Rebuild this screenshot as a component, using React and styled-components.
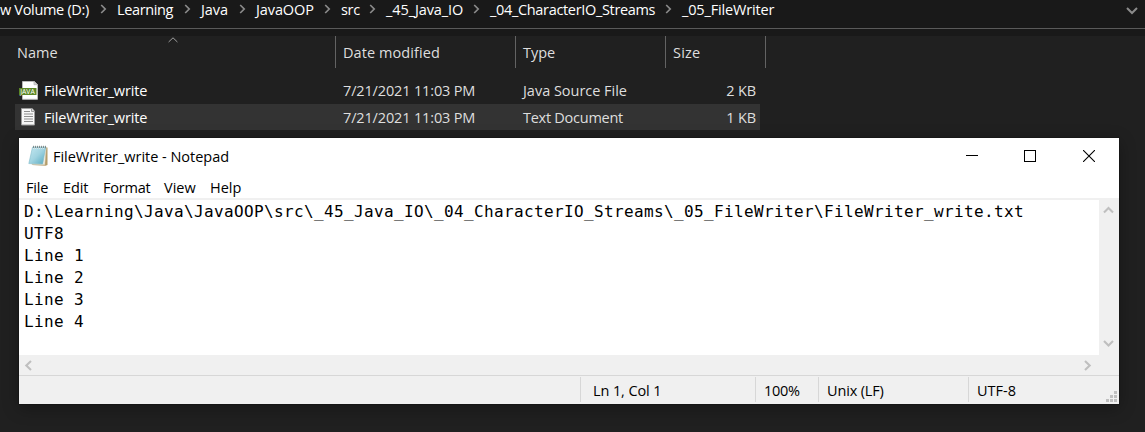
import React from 'react';
import styled, { createGlobalStyle } from 'styled-components';

const Global = createGlobalStyle`
  * { box-sizing: border-box; }
  html, body { margin: 0; background: #202020; overflow: hidden; }
  body { font: 14.5px/20px "Open Sans", "Noto Sans", sans-serif; }
`;

const Desktop = styled.main`
  width: 1145px;
  height: 432px;
  background: #202020;
  overflow: hidden;
`;

const Text = styled.span`
  white-space: pre;
  letter-spacing: ${(p) => p.$ls ?? -0.15}px;
`;

const AddressBar = styled.nav`
  display: flex;
  align-items: flex-start;
  height: 29px;
  background: #191919;
  border-bottom: 1px solid #5a5a5a;
  color: #fff;
`;

const Crumb = styled.div`
  flex: none;
  display: flex;
  width: ${(p) => p.$w}px;
  height: 20px;
`;

const CrumbChevron = styled.svg`
  flex: none;
  margin: 4px 10px 0 auto;
`;

const AddressDropdown = styled.svg`
  margin: 7px 7px 0 auto;
`;

const BarGap = styled.div`
  height: 7px;
  background: #191919;
`;

const Columns = styled.div`
  display: flex;
  height: 32px;
  padding-left: 15px;
  color: #dedede;
`;

const Column = styled.div`
  position: relative;
  width: ${(p) => p.$w}px;
  padding: ${(p) => (p.$first ? '7px 0 0 2px' : '7px 0 0 7px')};
  border-right: 1px solid #636363;
`;

const SortMark = styled.svg`
  position: absolute;
  left: 152.5px;
  top: 1px;
`;

const FileList = styled.div`
  padding: 9px 0 0 15px;
`;

const FileRow = styled.div`
  display: flex;
  align-items: center;
  width: 745px;
  height: 26px;
  margin-bottom: 1px;
  padding-top: 1px;
  background: ${(p) => (p.$selected ? '#333333' : 'transparent')};
  color: #dedede;
`;

const FileName = styled.div`
  display: flex;
  align-items: center;
  width: 328px;
  gap: 5px;
  padding-left: 4px;
  color: #fff;
`;

const FileDate = styled.div`
  width: 180px;
`;
const FileType = styled.div`
  width: 150px;
`;
const FileSize = styled.div`
  flex: 1;
  padding-right: 4px;
  text-align: right;
`;

const Window = styled.section`
  display: flex;
  flex-direction: column;
  width: 1100px;
  height: 266px;
  margin: 8px 0 0 19px;
  background: #fff;
  color: #000;
  box-shadow: 0 0 0 1px rgba(0, 0, 0, 0.15), 0 4px 16px rgba(0, 0, 0, 0.32);
`;

const TitleBar = styled.header`
  display: flex;
  height: 37px;
  padding-left: 9px;
`;

const TitleText = styled.div`
  padding: 9px 0 0 5px;
`;

const Controls = styled.div`
  display: flex;
  margin-left: auto;
`;

const Control = styled.button`
  display: flex;
  align-items: center;
  justify-content: center;
  width: ${(p) => p.$w ?? 58}px;
  height: 36px;
  padding: 0;
  border: 0;
  background: none;
`;

const MenuBar = styled.nav`
  display: flex;
  height: 25px;
  padding: 3px 0 0 7px;
  border-bottom: 2px solid #f0f0f0;
`;

const MenuItem = styled.div`
  width: ${(p) => p.$w}px;
`;

const Editor = styled.div`
  display: flex;
  height: 155px;
`;

const Content = styled.pre`
  flex: 1;
  margin: 0;
  padding: 1px 0 0 5px;
  font: 16px/22px "DejaVu Sans Mono", monospace;
  letter-spacing: 0.368px;
`;

const VScroll = styled.div`
  display: flex;
  flex-direction: column;
  justify-content: space-between;
  align-items: center;
  width: 20px;
  padding: 6px 1px 7px 0;
  background: #f0f0f0;
`;

const HScroll = styled.div`
  display: flex;
  justify-content: space-between;
  align-items: center;
  height: 20px;
  padding: 0 27px 0 5px;
  background: #f0f0f0;
`;

const StatusBar = styled.footer`
  display: flex;
  height: 29px;
  padding: 1px 0 2px;
  background: #f0f0f0;
  border-top: 1px solid #d7d7d7;
`;

const StatusCell = styled.div`
  width: ${(p) => p.$w}px;
  padding: ${(p) => `4px 0 0 ${p.$pad ?? 8}px`};
  border-left: ${(p) => (p.$first ? '0' : '1px solid #d7d7d7')};
`;

const Grip = styled.svg`
  align-self: flex-end;
  margin-left: auto;
  margin-right: 2px;
`;

const crumbs = [
  ['w Volume (D:)', 117, -0.32],
  ['Learning', 84, -0.36],
  ['Java', 55, -0.1],
  ['JavaOOP', 85, -0.1],
  ['src', 45, -0.3],
  ['_45_Java_IO', 104, -0.1],
  ['_04_CharacterIO_Streams', 192, -0.33],
];

const columns = [
  ['Name', 321, 0],
  ['Date modified', 180, 0.08],
  ['Type', 150, 0],
  ['Size', 100, 0.2],
];

const JavaIcon = () => (
  <svg width="20" height="20" viewBox="0 1 20 20">
    <path d="M3.5 1.5h12l3 3v14.8h-15z" fill="#fff" stroke="#b9b9b9" />
    <path d="M15 1.5v3.2h3.5z" fill="#ddd" stroke="#aaa" strokeWidth=".7" />
    <rect x="0" y="8" width="17.5" height="7" fill="#5c8727" />
    <text x="1.2" y="14.1" fontFamily="Open Sans, sans-serif" fontSize="7.2" textLength="14.6" lengthAdjust="spacingAndGlyphs" fill="#fff">JAVA</text>
  </svg>
);

const TextIcon = () => (
  <svg width="20" height="20" viewBox="0 0 20 20">
    <path d="M3.5.5h9.7l2.3 2.7v13.8h-13v-16.5z" fill="#f7f7f7" stroke="#9b9b9b" />
    <path d="M12.5.5v3h3" fill="#ddd" stroke="#9b9b9b" />
    <path d="M5 3.5h6M5 6h9M5 8.5h9M5 11h9M5 13.5h9" stroke="#8d8d8d" />
  </svg>
);

const NotepadIcon = () => (
  <svg width="20" height="22" viewBox="0 0 20 22">
    <defs>
      <linearGradient id="cover" x1="0" y1="0" x2="1" y2="1">
        <stop offset="0" stopColor="#c4e8f1" />
        <stop offset=".5" stopColor="#a0d3e0" />
        <stop offset="1" stopColor="#55a9c0" />
      </linearGradient>
    </defs>
    <path d="M18 2.5h1.5V20l-2 .7L4 20z" fill="#b59c69" />
    <path d="M5 2h13.3l-1.5 17.8L4 19.5z" fill="#f4f1e4" stroke="#c9c3ad" strokeWidth=".5" />
    <path d="M4.5 2.2h13.2L14.7 19 .8 18.6z" fill="url(#cover)" stroke="#83bccb" strokeWidth=".6" />
    <path d="M5 3.3h12" stroke="#fff" strokeDasharray="1 1" />
    <path d="M5.5.8v2.4M7.5.8v2.4M9.5.8v2.4M11.5.8v2.4M13.5.8v2.4M15.5.8v2.4M17.5.8v2.4" stroke="#68777b" strokeWidth=".8" />
  </svg>
);

const arrows = {
  up: 'M1 6.5L5.5 2L10 6.5',
  down: 'M1 2L5.5 6.5L10 2',
  left: 'M7 1L2.3 5.5L7 10',
  right: 'M2 1L6.7 5.5L2 10',
};
const ScrollArrow = ({ dir }) => {
  const vertical = dir === 'up' || dir === 'down';
  return (
    <svg width={vertical ? 11 : 9} height={vertical ? 9 : 11}>
      <path d={arrows[dir]} fill="none" stroke="#bfbfbf" strokeWidth="2.1" />
    </svg>
  );
};

const File = ({ icon, type, size, selected, typeLs }) => (
  <FileRow $selected={selected}>
    <FileName>{icon}<Text>FileWriter_write</Text></FileName>
    <FileDate><Text>7/21/2021 11:03 PM</Text></FileDate>
    <FileType><Text $ls={typeLs}>{type}</Text></FileType>
    <FileSize><Text>{size}</Text></FileSize>
  </FileRow>
);

const body = `D:\\Learning\\Java\\JavaOOP\\src\\_45_Java_IO\\_04_CharacterIO_Streams\\_05_FileWriter\\FileWriter_write.txt
UTF8
Line 1
Line 2
Line 3
Line 4`;

export default function App() {
  return (
    <Desktop>
      <Global />
      <AddressBar>
        {crumbs.map(([name, w, ls]) => (
          <Crumb key={name} $w={w}>
            <Text $ls={ls}>{name}</Text>
            <CrumbChevron width="7" height="10">
              <path d="M1.2 1L5.2 5L1.2 9" fill="none" stroke="#8b8b8b" strokeWidth="1.7" />
            </CrumbChevron>
          </Crumb>
        ))}
        <Text>_05_FileWriter</Text>
        <AddressDropdown width="12" height="8">
          <path d="M1 1L6 6L11 1" fill="none" stroke="#8b8b8b" strokeWidth="2" />
        </AddressDropdown>
      </AddressBar>
      <BarGap />
      <Columns>
        {columns.map(([name, w, ls], i) => (
          <Column key={name} $w={w} $first={i === 0}>
            <Text $ls={ls}>{name}</Text>
            {i === 0 && (
              <SortMark width="10" height="6">
                <path d="M.6 5L5 .8L9.4 5" fill="none" stroke="#a0a0a0" />
              </SortMark>
            )}
          </Column>
        ))}
      </Columns>
      <FileList>
        <File icon={<JavaIcon />} type="Java Source File" size="2 KB" typeLs={-0.02} />
        <File icon={<TextIcon />} type="Text Document" size="1 KB" typeLs={-0.26} selected />
      </FileList>
      <Window>
        <TitleBar>
          <svg width="20" height="30" viewBox="0 -7 20 30"><NotepadIcon /></svg>
          <TitleText><Text $ls={-0.02}>FileWriter_write - Notepad</Text></TitleText>
          <Controls>
            <Control aria-label="Minimize">
              <svg width="12" height="12"><path d="M0 5.5h12" stroke="#000" /></svg>
            </Control>
            <Control aria-label="Maximize">
              <svg width="12" height="12"><rect x=".5" y=".5" width="11" height="11" fill="none" stroke="#000" /></svg>
            </Control>
            <Control aria-label="Close" $w={60}>
              <svg width="12" height="12"><path d="M0 0L12 12M12 0L0 12" stroke="#000" strokeWidth="1.1" /></svg>
            </Control>
          </Controls>
        </TitleBar>
        <MenuBar>
          <MenuItem $w={37}><Text>File</Text></MenuItem>
          <MenuItem $w={40}><Text>Edit</Text></MenuItem>
          <MenuItem $w={61}><Text $ls={-0.2}>Format</Text></MenuItem>
          <MenuItem $w={46}><Text $ls={0}>View</Text></MenuItem>
          <MenuItem $w={40}><Text $ls={0}>Help</Text></MenuItem>
        </MenuBar>
        <Editor>
          <Content>{body}</Content>
          <VScroll><ScrollArrow dir="up" /><ScrollArrow dir="down" /></VScroll>
        </Editor>
        <HScroll><ScrollArrow dir="left" /><ScrollArrow dir="right" /></HScroll>
        <StatusBar>
          <StatusCell $w={561} $first />
          <StatusCell $w={175} $pad={12}><Text $ls={-0.1}>Ln 1, Col 1</Text></StatusCell>
          <StatusCell $w={63}><Text $ls={-0.3}>100%</Text></StatusCell>
          <StatusCell $w={150}><Text>Unix (LF)</Text></StatusCell>
          <StatusCell $w={100}><Text $ls={0}>UTF-8</Text></StatusCell>
          <Grip width="12" height="12" fill="#bfbfbf">
            <path d="M9 1h3v3h-3zM5 5h3v3h-3zM9 5h3v3h-3zM1 9h3v3h-3zM5 9h3v3h-3zM9 9h3v3h-3z" />
          </Grip>
        </StatusBar>
      </Window>
    </Desktop>
  );
}
